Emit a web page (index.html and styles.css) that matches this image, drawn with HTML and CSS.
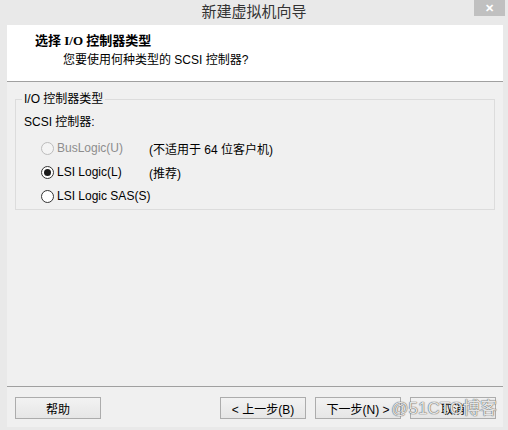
FILE: index.html
```html
<!DOCTYPE html>
<html lang="zh-CN">
<head>
    <meta charset="UTF-8">
    <title>新建虚拟机向导</title>
    <link rel="stylesheet" href="styles.css">
</head>
<body>
    <div class="window">
        <div class="titlebar">
            <span></span>
            <span class="title">新建虚拟机向导</span>
            <button class="close-btn">&#x2715;</button>
        </div>
        <div class="client">
            <div class="header">
                <div class="header-title">选择 I/O 控制器类型</div>
                <div class="header-sub">您要使用何种类型的 SCSI 控制器?</div>
            </div>
            <div class="body">
                <fieldset class="group">
                    <legend>I/O 控制器类型</legend>
                    <div class="group-label">SCSI 控制器:</div>
                    <div class="options">
                        <div class="option disabled">
                            <span class="radio"></span>
                            <span class="option-name">BusLogic(U)</span>
                            <span class="option-note">(不适用于 64 位客户机)</span>
                        </div>
                        <div class="option">
                            <span class="radio checked"></span>
                            <span class="option-name">LSI Logic(L)</span>
                            <span class="option-note">(推荐)</span>
                        </div>
                        <div class="option">
                            <span class="radio"></span>
                            <span class="option-name">LSI Logic SAS(S)</span>
                        </div>
                    </div>
                </fieldset>
            </div>
            <div class="footer">
                <button class="btn">帮助</button>
                <div class="nav-buttons">
                    <button class="btn">&lt; 上一步(B)</button>
                    <button class="btn">下一步(N) &gt;</button>
                    <button class="btn cancel">取消<span class="watermark">@51CTO博客</span></button>
                </div>
            </div>
        </div>
    </div>
</body>
</html>
```

FILE: styles.css
```css
* {
    box-sizing: border-box;
}

body {
    margin: 0;
    font-family: "Liberation Sans", "Noto Sans CJK SC", sans-serif;
    font-size: 12px;
    color: #000;
    background: #e9e9e9;
}

.window {
    width: 508px;
    height: 430px;
    display: flex;
    flex-direction: column;
    background: #e9e9e9;
}

.titlebar {
    height: 25px;
    display: grid;
    grid-template-columns: 1fr auto 1fr;
    align-items: start;
}

.title {
    font-size: 15px;
    line-height: 24px;
    color: #333;
}

.close-btn {
    justify-self: end;
    width: 31px;
    height: 16px;
    margin-right: 3px;
    padding: 0;
    border: none;
    background: #c0c0c0;
    color: #fff;
    font-size: 11px;
    font-weight: bold;
    line-height: 16px;
}

.client {
    flex: 1;
    margin: 0 5px 3px 7px;
    display: flex;
    flex-direction: column;
    background: #f0f0f0;
}

.header {
    height: 57px;
    background: #fff;
    border-bottom: 1px solid #a0a0a0;
    padding: 8px 0 0 28px;
}

.header-title {
    font-family: "Liberation Serif", "Noto Sans CJK SC", serif;
    font-weight: bold;
    font-size: 13px;
    line-height: 16px;
}

.header-sub {
    margin-left: 28px;
    margin-top: 3px;
    line-height: 17px;
}

.body {
    flex: 1;
    padding: 10px 8px 0 8px;
}

.group {
    margin: 0;
    height: 118px;
    padding: 0 0 0 8px;
    border: 1px solid #dcdcdc;
}

.group legend {
    padding: 0 2px;
    margin-left: -2px;
    line-height: 14px;
}

.group-label {
    margin-top: 8px;
    line-height: 16px;
}

.options {
    margin: 6px 0 0 17px;
}

.option {
    display: flex;
    align-items: center;
    height: 24px;
    white-space: nowrap;
}

.radio {
    flex: none;
    width: 13px;
    height: 13px;
    border: 1px solid #333;
    border-radius: 50%;
    background: #fff;
    display: flex;
    align-items: center;
    justify-content: center;
    margin-right: 3px;
}

.radio.checked::after {
    content: "";
    width: 7px;
    height: 7px;
    border-radius: 50%;
    background: #1a1a1a;
}

.option-name {
    min-width: 92px;
}

.disabled .radio {
    border-color: #bcbcbc;
    background: #f4f4f4;
}

.disabled .option-name {
    color: #8d8d8d;
}

.footer {
    border-top: 1px solid #a0a0a0;
    display: flex;
    justify-content: space-between;
    padding: 10px 7px 8px 8px;
}

.nav-buttons {
    display: flex;
    gap: 9px;
}

.btn {
    width: 86px;
    height: 22px;
    padding: 0;
    border: 1px solid #acacac;
    background: linear-gradient(#f2f2f2, #e6e6e6);
    font-family: "Liberation Sans", "Noto Sans CJK SC", sans-serif;
    font-size: 12px;
    color: #000;
}

.cancel {
    position: relative;
}

.watermark {
    position: absolute;
    right: -2px;
    top: 0;
    font-size: 17px;
    line-height: 22px;
    color: rgba(255, 255, 255, 0.85);
    text-shadow: 0 0 1px #555, 0 0 1px #555;
    white-space: nowrap;
}
```
